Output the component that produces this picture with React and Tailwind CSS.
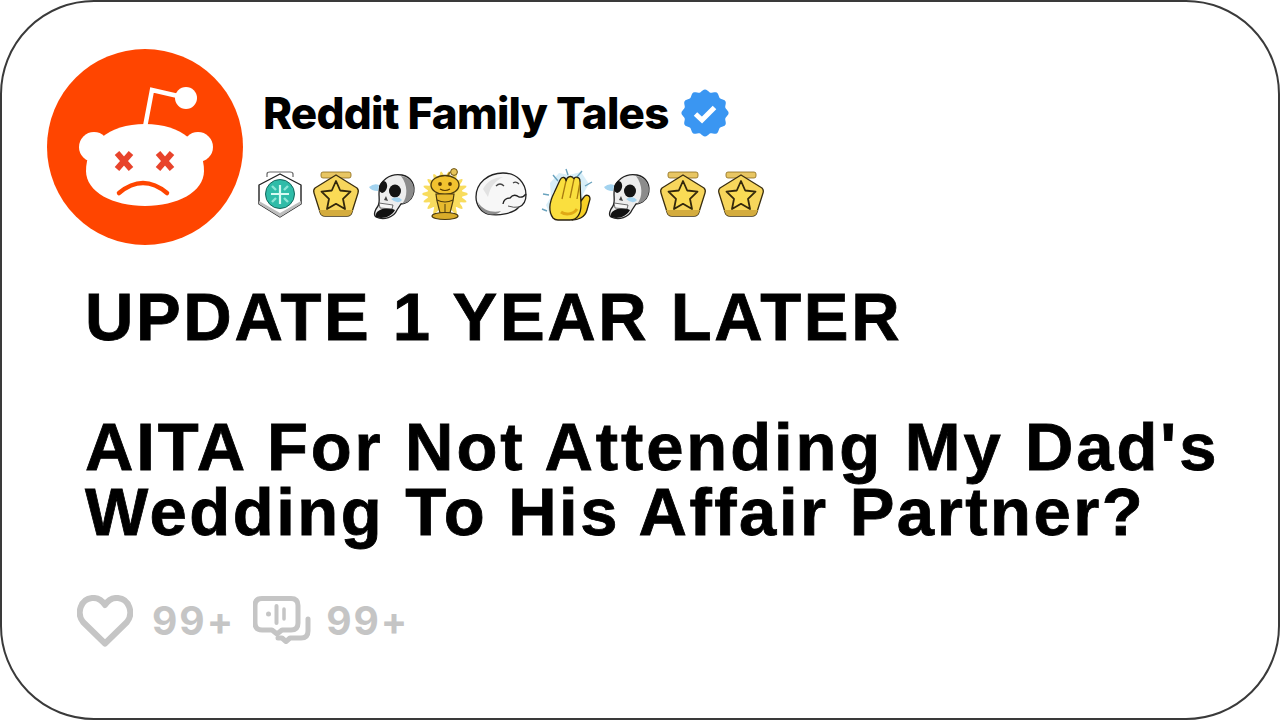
import React from "react";

function scallop(cx, cy, r, amp, n) {
  const pts = [];
  for (let i = 0; i < 120; i++) {
    const a = (i / 120) * Math.PI * 2;
    const rr = r + amp * Math.cos(n * a);
    pts.push(`${(cx + rr * Math.cos(a)).toFixed(2)},${(cy + rr * Math.sin(a)).toFixed(2)}`);
  }
  return pts.join(" ");
}

function Avatar() {
  return (
    <svg viewBox="0 0 196 196" className="w-[196px] h-[196px] shrink-0">
      <circle cx="98" cy="98" r="98" fill="#FF4500" />
      <path d="M98 78 L105 41 L131 47" fill="none" stroke="#fff" strokeWidth="4.5" />
      <circle cx="139" cy="49" r="11" fill="#fff" />
      <circle cx="47" cy="98" r="15" fill="#fff" />
      <circle cx="151" cy="98" r="15" fill="#fff" />
      <path d="M98 75 C135 75 157 95 157 122 C157 143 130 157 98 157 C66 157 39 143 39 122 C39 95 61 75 98 75 Z" fill="#fff" />
      <path d="M70 104 L84 120 M84 104 L70 120 M111 104 L125 120 M125 104 L111 120" stroke="#E8432B" strokeWidth="6" fill="none" />
      <path d="M72 144 Q96 124 120 144" stroke="#FF4500" strokeWidth="4.5" fill="none" strokeLinecap="round" />
    </svg>
  );
}

function Verified() {
  return (
    <svg viewBox="0 0 48 48" className="w-[48px] h-[48px] ml-[12px] shrink-0">
      <polygon points={scallop(24, 24, 22.3, 1.3, 12)} fill="#3A96F2" />
      <path d="M14.5 25 L21 31 L33.5 18.5" fill="none" stroke="#fff" strokeWidth="5" />
    </svg>
  );
}

function Gem() {
  return (
    <svg viewBox="0 0 56 56" className="w-[56px] h-[56px] shrink-0">
      <path d="M15 10 L15 7 Q15 5 18 5 L38 5 Q41 5 41 7 L41 10" fill="#fff" stroke="#666" strokeWidth="1.2" />
      <path d="M28 7 L49 18 L49 37 L28 50 L7 37 L7 18 Z" fill="#fff" stroke="#222" strokeWidth="1.4" strokeLinejoin="round" />
      <path d="M7 37 L28 50 L49 37 L49 34 L28 46 L7 34 Z" fill="#BDBDBD" />
      <circle cx="28" cy="27" r="14.5" fill="#2FBCA8" stroke="#14665C" strokeWidth="1" />
      <path d="M28 18 V37 M19 27 H37" stroke="#D8FAF2" strokeWidth="2.2" />
      <path d="M20 19 L24 23 M36 19 L32 23 M20 35 L24 31 M36 35 L32 31" stroke="#8CE6D6" strokeWidth="2.4" />
    </svg>
  );
}

function Star() {
  return (
    <svg viewBox="0 0 56 56" className="w-[56px] h-[56px] shrink-0">
      <rect x="13" y="5" width="30" height="6" rx="2" fill="#E8C663" stroke="#8A6A1A" strokeWidth="0.8" />
      <path d="M28 8 L49 21 Q51 23 50 26 L44 45 Q43 49 39 49 L17 49 Q13 49 12 45 L6 26 Q5 23 7 21 Z" fill="#F7D65C" stroke="#3A2E10" strokeWidth="1.3" strokeLinejoin="round" />
      <path d="M12 45 Q13 49 17 49 L39 49 Q43 49 44 45 L45 43 L11 43 Z" fill="#D4AC3E" />
      <path d="M28 14 L32.2 23.5 L42.5 24.7 L35 31.8 L37 42 L28 36.8 L19 42 L21 31.8 L13.5 24.7 L23.8 23.5 Z" fill="#FADB55" stroke="#33280C" strokeWidth="1.8" strokeLinejoin="round" />
    </svg>
  );
}

function Skull() {
  return (
    <svg viewBox="0 0 56 56" className="w-[56px] h-[56px] shrink-0">
      <path d="M15 27 C14 13 27 6 38 8 C48 10 52 19 49 28 C47 34 41 37 37 37 L33 43 C30 50 20 54 12 50 C9 48 11 43 14 39 C16 35 15 31 15 27 Z" fill="#EDEDED" stroke="#222" strokeWidth="1.3" />
      <path d="M37 9 C47 10 52 19 49 28 C47 34 42 36 38 37 C44 30 44 18 37 9 Z" fill="#8C8C8C" />
      <ellipse cx="19" cy="20" rx="4" ry="6" transform="rotate(15 19 20)" fill="#141414" />
      <ellipse cx="31" cy="24" rx="6" ry="6.5" fill="#141414" />
      <path d="M22 29 L24 34 L20 33 Z" fill="#444" />
      <path d="M13 45 C17 41 25 40 31 43 C28 49 19 53 12 50 C11 48 12 47 13 45 Z" fill="#111" />
      <path d="M15 36 L29 38 L28 42 L16 41 Z" fill="#F6F6F6" stroke="#333" strokeWidth="0.7" />
      <path d="M14 24 Q7 24 5 20 Q10 16 15 18 Z" fill="#A3D3EF" />
      <path d="M27 32 Q34 28 38 33 Q34 38 27 32 Z" fill="#A3D3EF" />
    </svg>
  );
}

function Trophy() {
  return (
    <svg viewBox="0 0 56 56" className="w-[56px] h-[56px] shrink-0">
      <polygon points={scallop(28, 27, 20, 3, 18)} fill="#F8DC5E" />
      <path d="M30 10 L33 5" stroke="#8A6A1A" strokeWidth="1.5" />
      <circle cx="37" cy="5" r="3.4" fill="#E6C45A" stroke="#6B5214" strokeWidth="1" />
      <ellipse cx="28" cy="18" rx="14" ry="9.5" fill="#F1C22F" stroke="#4A3A0E" strokeWidth="1.3" />
      <circle cx="23" cy="17" r="1.9" fill="#5A3A00" />
      <circle cx="33" cy="17" r="1.9" fill="#5A3A00" />
      <path d="M23 22 Q28 25 33 22" stroke="#5A3A00" strokeWidth="1.1" fill="none" />
      <path d="M19 27 L37 27 L36 34 L33 46 L23 46 L20 34 Z" fill="#E6B92E" stroke="#4A3A0E" strokeWidth="1.2" />
      <path d="M20 33 Q28 37 36 33" stroke="#4A3A0E" strokeWidth="1.2" fill="none" />
      <path d="M28 37 V45" stroke="#4A3A0E" strokeWidth="1" />
      <ellipse cx="28" cy="49" rx="13" ry="3.5" fill="#D9AC2A" stroke="#4A3A0E" strokeWidth="1.2" />
    </svg>
  );
}

function Seal() {
  return (
    <svg viewBox="0 0 56 56" className="w-[56px] h-[56px] shrink-0">
      <path d="M3 30 C3 16 15 6 30 6 C44 6 53 16 53 28 C53 33 51 38 46 40 C40 47 25 49 15 47 C8 45 3 38 3 30 Z" fill="#F7F7F7" stroke="#222" strokeWidth="1.3" />
      <path d="M5 35 C10 44 20 46 28 44 C24 48 20 48 15 47 C9 45 6 40 5 35 Z" fill="#8E8E8E" />
      <path d="M10 22 C14 14 22 10 30 10 C22 14 17 20 15 30 Z" fill="#E2E2E2" />
      <path d="M23 19 Q27 15 31 19 M40 16 Q43 14 46 17" stroke="#444" strokeWidth="1.3" fill="none" />
      <path d="M30 37 Q31 31 37 31 Q41 26 46 30 Q50 31 53 27" stroke="#222" strokeWidth="1.3" fill="none" />
      <path d="M35 39 Q41 41 46 40" stroke="#555" strokeWidth="1" fill="none" />
    </svg>
  );
}

function Clap() {
  return (
    <svg viewBox="0 0 56 56" className="w-[56px] h-[56px] shrink-0">
      <path d="M11 16 L20 6 L30 8 L42 5 L50 17 L44 27 L46 46 L28 52 L12 50 L7 38 L12 30 Z" fill="#D8EEF8" />
      <path d="M14 8 L19 14 M27 2 L29 8 M43 4 L38 10 M53 15 L46 19 M4 27 L10 28 M3 42 L8 44" stroke="#6AA3BE" strokeWidth="1.4" />
      <path d="M33 53 C38 53 46 51 48 43 L51 32 C51 28 47 27 45 30 L42 34 L39 14 C38 10 34 11 33 14 Z" fill="#F6CF25" stroke="#2A2210" strokeWidth="1.3" strokeLinejoin="round" />
      <path d="M14 51 C9 44 11 34 15 26 L21 13 C23 9 27 10 27 14 C28 9 33 8 35 12 C36 9 41 10 41 14 L42 38 C42 47 38 53 31 53 L19 53 C16 53 15 52 14 51 Z" fill="#FADF3E" stroke="#2A2210" strokeWidth="1.3" strokeLinejoin="round" />
      <path d="M27 14 L23 32 M35 12 L31 31 M41 15 L38 32" stroke="#A87A10" strokeWidth="1.3" fill="none" />
      <path d="M22 45 C26 48 34 48 38 42" stroke="#E0A915" strokeWidth="3" fill="none" />
    </svg>
  );
}

function Heart() {
  return (
    <svg viewBox="0 0 56 52" className="w-[56px] h-[52px] shrink-0">
      <path d="M28 48.5 L6 27 C-1 18 4 4 15 3 C21 2.5 25 5 28 10 C31 5 35 2.5 41 3 C52 4 57 18 50 27 Z" fill="none" stroke="#C5C5C5" strokeWidth="6" strokeLinejoin="round" />
    </svg>
  );
}

function Comment() {
  return (
    <svg viewBox="0 0 58 50" className="w-[58px] h-[50px] shrink-0">
      <path d="M9 2.5 H38 Q45 2.5 45 9.5 V27 Q45 34 38 34 H29 L24 38 L19 34 H9 Q2 34 2 27 V9.5 Q2 2.5 9 2.5 Z" fill="none" stroke="#C5C5C5" strokeWidth="5" strokeLinejoin="round" />
      <path d="M23.5 10 V27" stroke="#C5C5C5" strokeWidth="4" strokeLinecap="round" />
      <path d="M31 13 V23" stroke="#C5C5C5" strokeWidth="3.5" strokeLinecap="round" />
      <circle cx="15.5" cy="18" r="2.5" fill="#C5C5C5" />
      <path d="M55 23 V35 Q55 42 48 42 H37 L33 45.5 L29 42 H25" fill="none" stroke="#C5C5C5" strokeWidth="5" strokeLinejoin="round" strokeLinecap="round" />
    </svg>
  );
}

export default function App() {
  const title = "font-['Liberation_Sans',Arial,sans-serif] font-bold text-[67px] leading-[65px] [-webkit-text-stroke:0.8px_#000] text-black";
  const name = "font-['Inter',sans-serif] font-extrabold text-[44px] leading-[48px] tracking-[-0.8px] text-black";
  const count = "font-['Inter',sans-serif] font-bold text-[39px] leading-[50px] tracking-[2px] text-[#C5C5C5]";
  return (
    <div className="w-[1280px] h-[720px] bg-white overflow-hidden">
      <div className="w-full h-full box-border border-2 border-[#3a3a3a] rounded-[94px] bg-white pt-[47px] pl-[45px] flex flex-col">
        <div className="flex items-start gap-[14px]">
          <Avatar />
          <div className="flex flex-col pt-[40px]">
            <div className="flex items-center ml-[6px]">
              <span className={name}>Reddit Family Tales</span>
              <Verified />
            </div>
            <div className="flex items-center mt-[30px] -ml-[5px]">
              <Gem />
              <Star />
              <Skull />
              <div className="-ml-[3px]"><Trophy /></div>
              <Seal />
              <div className="ml-[10px]"><Clap /></div>
              <div className="ml-[4px]"><Skull /></div>
              <Star />
              <div className="ml-[2px]"><Star /></div>
            </div>
          </div>
        </div>
        <div className={`${title} ml-[38px] mt-[39px]`}>
          <div className="tracking-[2.65px]">UPDATE 1 YEAR LATER</div>
          <div className="h-[65px]" />
          <div className="tracking-[2.9px]">AITA For Not Attending My Dad's</div>
          <div className="tracking-[2.5px]">Wedding To His Affair Partner?</div>
        </div>
        <div className="flex items-center ml-[30px] mt-[51px]">
          <Heart />
          <span className={`${count} ml-[19px]`}>99+</span>
          <div className="ml-[18px]"><Comment /></div>
          <span className={`${count} ml-[15px]`}>99+</span>
        </div>
      </div>
    </div>
  );
}
